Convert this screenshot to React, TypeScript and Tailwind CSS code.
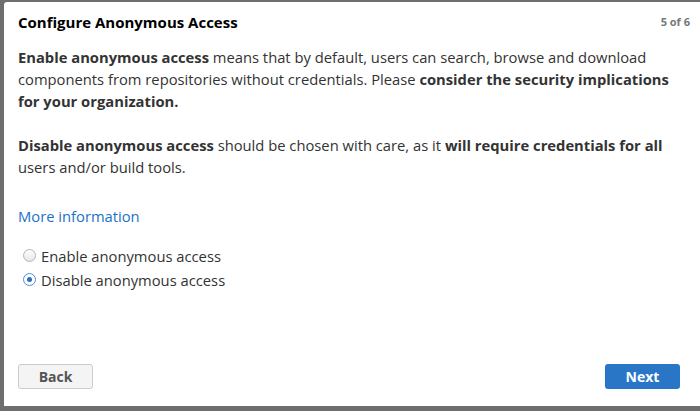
import React from 'react';

const Radio = ({ checked }: { checked: boolean }) => (
  <span
    className={
      'flex h-[13px] w-[13px] items-center justify-center rounded-full border bg-gradient-to-b ' +
      (checked ? 'border-[#4a90d9] from-white to-white' : 'border-[#b5b5b5] from-white to-[#e6e6e6]')
    }
  >
    {checked && <span className="h-[5px] w-[5px] rounded-full bg-[#2a6fc0]" />}
  </span>
);

export default function App() {
  return (
    <div className="h-[411px] w-[700px] overflow-hidden bg-[#6e6e6e] pt-[2px] pl-[4px]" style={{ fontFamily: '"Open Sans", Lato, sans-serif' }}>
      <div className="flex h-[404px] w-[720px] flex-col rounded-tl-[3px] bg-white pl-[14px] pr-[34px] text-[#333]">
        <div className="flex items-center justify-between pt-[9px] pb-[12px]">
          <h1 className="text-[15px] font-bold text-black">Configure Anonymous Access</h1>
          <span className="text-[11px] font-bold text-[#777]">5 of 6</span>
        </div>

        <div className="text-[14.75px] leading-[22px] whitespace-nowrap">
          <p>
            <b>Enable anonymous access</b> means that by default, users can search, browse and download
            <br />
            components from repositories without credentials. Please <b>consider the security implications</b>
            <br />
            <b>for your organization.</b>
          </p>
          <p className="mt-[22px]">
            <b>Disable anonymous access</b> should be chosen with care, as it <b>will require credentials for all</b>
            <br />
            users and/or build tools.
          </p>
          <a className="mt-[27px] block text-[#1a72c6]" href="#">More information</a>

          <div className="mt-[18px] flex flex-col gap-[2px]">
            <label className="flex items-center gap-[5px] pl-[5px]">
              <Radio checked={false} />
              <span>Enable anonymous access</span>
            </label>
            <label className="flex items-center gap-[5px] pl-[5px]">
              <Radio checked />
              <span>Disable anonymous access</span>
            </label>
          </div>
        </div>

        <div className="mt-auto mb-[17px] flex w-[662px] justify-between">
          <button className="h-[25px] w-[75px] rounded-[3px] border border-[#ccc] bg-[#f4f4f4] text-[14px] font-bold text-[#555]">
            Back
          </button>
          <button className="h-[25px] w-[75px] rounded-[3px] bg-[#2a76c6] text-[14px] font-bold text-white">
            Next
          </button>
        </div>
      </div>
    </div>
  );
}
